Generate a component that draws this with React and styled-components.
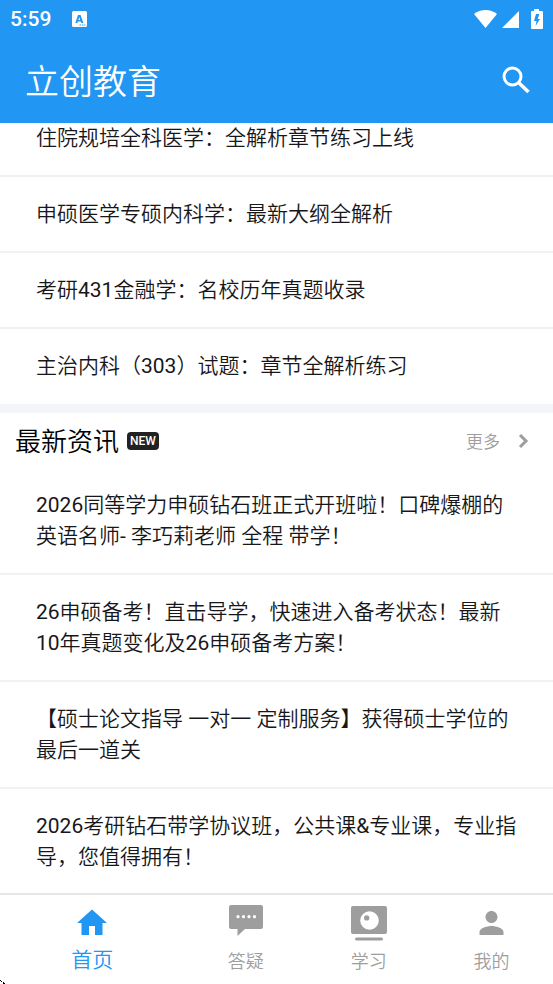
import React from "react"
import styled, { createGlobalStyle, ThemeProvider } from "styled-components"

const theme = {
  colors: {
    primary: "#2296f3",
    text: "#17171a",
    muted: "#9e9e9e",
    divider: "#f2f2f3",
    band: "#f4f5fa",
    background: "#ffffff",
  },
  gutter: "36px",
}

const GlobalStyle = createGlobalStyle`
  * {
    box-sizing: border-box;
  }
  body {
    margin: 0;
    background: #ffffff;
    font-family: Roboto, "Noto Sans CJK SC DemiLight", "Noto Sans CJK SC", sans-serif;
    text-spacing-trim: space-all;
  }
  a {
    color: inherit;
    text-decoration: none;
  }
`

const Screen = styled.div`
  position: relative;
  height: 100vh;
  display: flex;
  flex-direction: column;
  overflow: hidden;
  color: ${({ theme }) => theme.colors.text};
  background: ${({ theme }) => theme.colors.background};
`

const TopBar = styled.header`
  flex: none;
  color: #ffffff;
  background: ${({ theme }) => theme.colors.primary};
`

const StatusBar = styled.div`
  height: 38px;
  padding: 0 9px 0 10px;
  display: flex;
  align-items: center;
  svg {
    display: block;
    fill: currentColor;
  }
`

const Clock = styled.time`
  margin-right: 21px;
  font-size: 21px;
  font-weight: 500;
  line-height: 38px;
`

const StatusIcons = styled.div`
  margin-left: auto;
  display: flex;
  align-items: center;
`

const TitleBar = styled.div`
  height: 85px;
  padding: 0 22px 0 25px;
  display: flex;
  align-items: center;
  justify-content: space-between;
`

const AppTitle = styled.h1`
  margin: 0;
  padding-top: 2px;
  font-size: 34px;
  font-weight: 350;
  line-height: 48px;
`

const IconButton = styled.button`
  padding: 0;
  border: 0;
  color: inherit;
  background: none;
  svg {
    display: block;
  }
`

const Feed = styled.main`
  flex: 1;
  min-height: 0;
  overflow: hidden;
`

const List = styled.ul`
  margin: 0;
  margin-top: ${({ $scrolled }) => ($scrolled ? "-22px" : "0")};
  padding: 0;
  list-style: none;
`

const Row = styled.li`
  padding: 22px ${({ theme }) => theme.gutter} 21px;
  border-bottom: 2px solid ${({ theme }) => theme.colors.divider};
  font-size: 21px;
  line-height: 31px;
  &:last-child {
    border-bottom: 1px solid transparent;
  }
  a {
    display: block;
  }
`

const Band = styled.div`
  height: 9px;
  background: ${({ theme }) => theme.colors.band};
`

const SectionHead = styled.div`
  height: 55px;
  padding: 0 23px 0 15px;
  display: flex;
  align-items: center;
`

const SectionTitle = styled.h2`
  margin: 0;
  padding-top: 2px;
  color: #000000;
  font-size: 26px;
  font-weight: 350;
  line-height: 36px;
`

const NewBadge = styled.span`
  margin-left: 8px;
  padding: 0 3px;
  border-radius: 4px;
  color: #ffffff;
  background: #222222;
  font-size: 12px;
  font-weight: 500;
  line-height: 18px;
`

const More = styled.a`
  margin-left: auto;
  padding-top: 2px;
  display: flex;
  align-items: center;
  gap: 18px;
  && {
    color: ${({ theme }) => theme.colors.muted};
  }
  font-size: 17px;
  font-weight: 350;
  line-height: 24px;
`

const BottomNav = styled.nav`
  flex: none;
  height: 91px;
  display: flex;
  border-top: 2px solid #e6e6e6;
  background: ${({ theme }) => theme.colors.background};
`

const NavItem = styled.a`
  flex: ${({ $active }) => ($active ? "1.5" : "1")} 1 0;
  padding-top: 10px;
  display: flex;
  flex-direction: column;
  align-items: center;
  gap: 4px;
  && {
    color: ${({ $active, theme }) => ($active ? theme.colors.primary : theme.colors.muted)};
  }
  font-size: ${({ $active }) => ($active ? "21px" : "18px")};
  font-weight: 350;
  line-height: ${({ $active }) => ($active ? "31px" : "33px")};
  svg {
    display: block;
    fill: currentColor;
  }
`

const Pointer = styled.svg`
  position: absolute;
  left: 0;
  bottom: 0;
  pointer-events: none;
`

const courses = [
  "住院规培全科医学：全解析章节练习上线",
  "申硕医学专硕内科学：最新大纲全解析",
  "考研431金融学：名校历年真题收录",
  "主治内科（303）试题：章节全解析练习",
]

const news = [
  "2026同等学力申硕钻石班正式开班啦！口碑爆棚的英语名师- 李巧莉老师 全程 带学！",
  "26申硕备考！直击导学，快速进入备考状态！最新10年真题变化及26申硕备考方案！",
  "【硕士论文指导 一对一 定制服务】获得硕士学位的最后一道关",
  "2026考研钻石带学协议班，公共课&专业课，专业指导，您值得拥有！",
]

const HomeIcon = () => (
  <svg width="36" height="36" viewBox="0 0 24 24">
    <path d="M10 20v-6h4v6h5v-8h3L12 3 2 12h3v8z" />
  </svg>
)

const ChatIcon = () => (
  <svg width="36" height="36" viewBox="0 0 36 36">
    <path d="M3 0h30q2 0 2 2v20q0 2-2 2H17l-7.500 7v-7H3q-2 0-2-2V2q0-2 2-2z" />
    <g fill="#ffffff">
      <circle cx="10" cy="11.700" r="1.600" />
      <circle cx="15.500" cy="11.700" r="1.600" />
      <circle cx="21" cy="11.700" r="1.600" />
      <circle cx="26.500" cy="11.700" r="1.600" />
    </g>
  </svg>
)

const StudyIcon = () => (
  <svg width="36" height="36" viewBox="0 0 36 36">
    <rect x="0" y="1" width="36" height="28" rx="2" />
    <circle cx="18.500" cy="15.500" r="9.300" fill="#ffffff" />
    <circle cx="15.700" cy="12.900" r="2.700" />
    <rect x="4" y="32.500" width="28" height="3" rx="1.500" />
  </svg>
)

const PersonIcon = () => (
  <svg width="37" height="36" viewBox="0 0 24 24">
    <path d="M12 12c2.210 0 4-1.790 4-4s-1.790-4-4-4-4 1.790-4 4 1.790 4 4 4zm0 2c-2.670 0-8 1.340-8 4v2h16v-2c0-2.660-5.330-4-8-4z" />
  </svg>
)

const tabs = [
  { label: "首页", icon: HomeIcon, active: true },
  { label: "答疑", icon: ChatIcon },
  { label: "学习", icon: StudyIcon },
  { label: "我的", icon: PersonIcon },
]

const App = () => {
  return (
    <ThemeProvider theme={theme}>
      <GlobalStyle />
      <Screen>
        <TopBar>
          <StatusBar>
            <Clock>5:59</Clock>
            <svg width="16" height="16" viewBox="0 0 16 16">
              <path
                fillRule="evenodd"
                d="M1.500 0h12Q15 0 15 1.500v13q0 1.500-1.500 1.500h-12Q0 16 0 14.500v-13Q0 0 1.500 0zM6 4 3.300 12h2l.5-1.500h3L9.300 12h2L8.600 4zm1.300 2 .9 3H6.400zM7.500 13.500v1H9v-1zm2.500 0v1h1.200v-1zm2.200 0v1h1.200v-1z"
              />
            </svg>
            <StatusIcons>
              <svg width="27" height="18" viewBox="0 0 27 18">
                <path d="M0 4Q5 0 11.500 0T23 4L11.500 18z" />
              </svg>
              <svg width="29" height="18" viewBox="0 0 29 18">
                <path d="M1 18 18 1v17z" />
              </svg>
              <svg width="14" height="20" viewBox="0 0 14 20">
                <path
                  fillRule="evenodd"
                  d="M4 0h5v2h3q1 0 1 1v16q0 1-1 1H2q-1 0-1-1V3q0-1 1-1h2zM6 5l-2 7h2.500l-.9 5 4.400-7H7.700L9.300 5z"
                />
              </svg>
            </StatusIcons>
          </StatusBar>
          <TitleBar>
            <AppTitle>立创教育</AppTitle>
            <IconButton type="button" aria-label="搜索">
              <svg width="30" height="30" viewBox="0 0 30 30" fill="none" stroke="currentColor">
                <circle cx="11.500" cy="10.500" r="8.500" strokeWidth="3" />
                <path d="M17.500 16.500 27.500 26" strokeWidth="3.600" />
              </svg>
            </IconButton>
          </TitleBar>
        </TopBar>

        <Feed>
          <List $scrolled>
            {courses.map(title => (
              <Row key={title}>
                <a href="#course">{title}</a>
              </Row>
            ))}
          </List>
          <Band />
          <SectionHead>
            <SectionTitle>最新资讯</SectionTitle>
            <NewBadge>NEW</NewBadge>
            <More href="#more">
              更多
              <svg width="12" height="16" viewBox="0 0 12 16" fill="none" stroke="currentColor" strokeWidth="3">
                <path d="M2 1l6 6-6 6" />
              </svg>
            </More>
          </SectionHead>
          <List>
            {news.map(title => (
              <Row key={title}>
                <a href="#news">{title}</a>
              </Row>
            ))}
          </List>
        </Feed>

        <BottomNav>
          {tabs.map(({ label, icon: Icon, active }) => (
            <NavItem key={label} href="#tab" $active={active}>
              <Icon />
              {label}
            </NavItem>
          ))}
        </BottomNav>
        <Pointer width="5" height="4" viewBox="0 0 5 4" aria-hidden="true">
          <path d="M0 0h1v1H0zM1 1h1v1H1zM3 2h1v1H3zM3 3h2v1H3z" />
        </Pointer>
      </Screen>
    </ThemeProvider>
  )
}

export default App
